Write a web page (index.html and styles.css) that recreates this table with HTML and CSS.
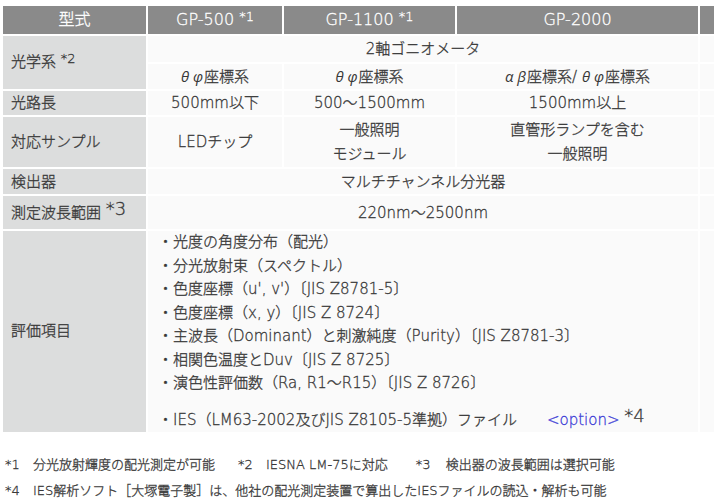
FILE: index.html
```html
<!DOCTYPE html>
<html lang="ja">
<head>
<meta charset="utf-8">
<link rel="stylesheet" href="styles.css">
</head>
<body>
<div class="page">
  <table class="spec">
    <colgroup>
      <col class="c1"><col class="c2"><col class="c3"><col class="c4"><col class="c5">
    </colgroup>
    <thead>
      <tr class="r-head">
        <th>型式</th>
        <th>GP-500 <span class="sup-s">*1</span></th>
        <th>GP-1100 <span class="sup-s">*1</span></th>
        <th>GP-2000</th>
        <th></th>
      </tr>
    </thead>
    <tbody>
      <tr class="r-a">
        <td class="label" rowspan="2">光学系 <span class="sup-s">*2</span></td>
        <td colspan="3">2軸ゴニオメータ</td>
        <td></td>
      </tr>
      <tr class="r-b">
        <td><i class="gk">θ φ</i>座標系</td>
        <td><i class="gk">θ φ</i>座標系</td>
        <td><i class="gk">α β</i>座標系/ <i class="gk">θ φ</i>座標系</td>
        <td></td>
      </tr>
      <tr class="r-c">
        <td class="label">光路長</td>
        <td>500mm以下</td>
        <td>500〜1500mm</td>
        <td>1500mm以上</td>
        <td></td>
      </tr>
      <tr class="r-d">
        <td class="label">対応サンプル</td>
        <td>LEDチップ</td>
        <td>一般照明<br>モジュール</td>
        <td>直管形ランプを含む<br>一般照明</td>
        <td></td>
      </tr>
      <tr class="r-e">
        <td class="label">検出器</td>
        <td colspan="3">マルチチャンネル分光器</td>
        <td></td>
      </tr>
      <tr class="r-f">
        <td class="label">測定波長範囲 <span class="sup-l">*3</span></td>
        <td colspan="3">220nm〜2500nm</td>
        <td></td>
      </tr>
      <tr class="r-g">
        <td class="label">評価項目</td>
        <td colspan="3" class="list">
          <div class="li">・光度の角度分布（配光）</div>
          <div class="li">・分光放射束（スペクトル）</div>
          <div class="li">・色度座標（u', v'）〔JIS Z8781-5〕</div>
          <div class="li">・色度座標（x, y）〔JIS Z 8724〕</div>
          <div class="li">・主波長（Dominant）と刺激純度（Purity）〔JIS Z8781-3〕</div>
          <div class="li">・相関色温度とDuv〔JIS Z 8725〕</div>
          <div class="li">・演色性評価数（Ra, R1〜R15）〔JIS Z 8726〕</div>
          <div class="li last">・IES（LM63-2002及びJIS Z8105-5準拠）ファイル<span class="opt">&lt;option&gt;</span> <span class="sup-l">*4</span></div>
        </td>
        <td></td>
      </tr>
    </tbody>
  </table>
  <div class="notes">
    <p class="note"><span class="mk">*1</span>分光放射輝度の配光測定が可能<span class="mk gap">*2</span>IESNA LM-75に対応<span class="mk gap2">*3</span>検出器の波長範囲は選択可能</p>
    <p class="note"><span class="mk">*4</span>IES解析ソフト［大塚電子製］は、他社の配光測定装置で算出したIESファイルの読込・解析も可能</p>
  </div>
</div>
</body>
</html>
```

FILE: styles.css
```css
html, body {
  margin: 0;
  padding: 0;
  background: #ffffff;
}
.page {
  width: 714px;
  height: 501px;
  overflow: hidden;
  font-family: "DejaVu Sans", "Noto Sans CJK JP", sans-serif;
  font-weight: 200;
  color: #383838;
  -webkit-text-stroke: 0.3px currentColor;
}
.spec {
  margin: 4px 0 0 1px;
  border-collapse: separate;
  border-spacing: 2px;
  table-layout: fixed;
  width: 820px;
  font-size: 15px;
}
.c1 { width: 143px; }
.c2 { width: 134px; }
.c3 { width: 171px; }
.c4 { width: 241px; }
.c5 { width: 121px; }
.spec th, .spec td {
  padding: 0;
  text-align: center;
  vertical-align: middle;
  background: #fafafa;
  line-height: 24px;
  font-weight: 200;
}
.spec th {
  background: #8a8a8a;
  color: #ffffff;
  font-size: 16px;
}
.spec td.label {
  background: #dcdddd;
  text-align: left;
  padding-left: 8px;
}
.r-head th { height: 28px; }
.r-a td { height: 26px; }
.r-b td { height: 24px; }
.r-c td { height: 24px; }
.r-d td { height: 50px; }
.r-e td { height: 25px; }
.r-f td { height: 33px; }
.r-g td { height: 200px; }
.gk {
  font-family: "Open Sans", sans-serif;
  font-weight: 400;
  font-style: italic;
  -webkit-text-stroke: 0;
  margin-right: 1px;
}
.sup-s {
  font-size: 13px;
  position: relative;
  top: -4px;
}
.sup-l {
  font-size: 18px;
  position: relative;
  top: -3px;
}
.spec td.list {
  text-align: left;
  padding-left: 10px;
  vertical-align: top;
}
.li {
  line-height: 23.5px;
  white-space: nowrap;
}
.li.last {
  line-height: 24px;
  padding-top: 11px;
}
.opt {
  color: #3b3bd6;
  margin-left: 30px;
}
.notes {
  margin-top: 18px;
  padding-left: 5px;
  font-size: 13px;
}
.note {
  margin: 0;
  line-height: 26px;
  white-space: nowrap;
}
.mk {
  display: inline-block;
  width: 28px;
}
.mk.gap {
  margin-left: 23px;
}
.mk.gap2 {
  margin-left: 28px;
  width: 30px;
}
```
